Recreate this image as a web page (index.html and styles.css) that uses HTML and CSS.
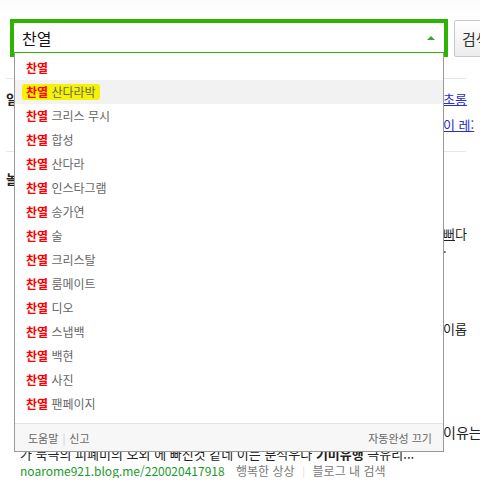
FILE: index.html
```html
<!DOCTYPE html>
<html lang="ko">
<head>
  <meta charset="UTF-8" />
  <meta name="viewport" content="width=device-width, initial-scale=1.0" />
  <title>찬열 - 검색</title>
  <link rel="stylesheet" href="styles.css">
</head>
<body>
  <div class="topbar"></div>

  <!-- Search bar with autocomplete layer -->
  <div class="search-row">
    <div class="search-box">
      <span class="query">찬열</span>
      <span class="arrow"></span>

      <div class="suggest">
        <ul class="suggest-list">
          <li class="item"><b>찬열</b></li>
          <li class="item on"><span class="mark"><b>찬열</b> 산다라박</span></li>
          <li class="item"><b>찬열</b> 크리스 무시</li>
          <li class="item"><b>찬열</b> 합성</li>
          <li class="item"><b>찬열</b> 산다라</li>
          <li class="item"><b>찬열</b> 인스타그램</li>
          <li class="item"><b>찬열</b> 송가연</li>
          <li class="item"><b>찬열</b> 술</li>
          <li class="item"><b>찬열</b> 크리스탈</li>
          <li class="item"><b>찬열</b> 룸메이트</li>
          <li class="item"><b>찬열</b> 디오</li>
          <li class="item"><b>찬열</b> 스냅백</li>
          <li class="item"><b>찬열</b> 백현</li>
          <li class="item"><b>찬열</b> 사진</li>
          <li class="item"><b>찬열</b> 팬페이지</li>
        </ul>
        <div class="suggest-foot">
          <span>도움말<i class="sep">|</i>신고</span>
          <span>자동완성 끄기</span>
        </div>
      </div>
    </div>
    <button class="search-btn">검색</button>
  </div>

  <!-- Results underneath the layer -->
  <div class="results">
    <div class="rule"></div>
    <div class="row r1"><span class="side">일</span><a class="link">초롱</a></div>
    <div class="row r2"><span></span><a class="link">이 레:</a></div>
    <div class="rule r3"></div>
    <div class="row r4"><span class="side">놀</span><span></span></div>
    <div class="row r5"><span></span><span><u>뻐</u>다</span></div>
    <div class="row r6"><span></span><span>·</span></div>
    <div class="row r7"><span></span><span>이롭</span></div>
    <div class="row r8"><span></span><span class="big">이유는</span></div>
    <p class="desc">가 북극의 피폐미의 오외 에 빠진것 같네 이는 분석우다 <b>기미유행</b> 극유리...</p>
    <p class="meta"><span class="url">noarome921.blog.me/220020417918</span> 행복한 상상 <i class="sep">|</i> 블로그 내 검색</p>
  </div>
</body>
</html>
```

FILE: styles.css
```css
* {
  margin: 0;
  padding: 0;
  box-sizing: border-box;
}
body {
  font-family: "Noto Sans CJK KR", "Noto Sans", sans-serif;
  font-size: 13px;
  color: #333;
  background: #fff;
  overflow: hidden;
}
ul {
  list-style: none;
}
i {
  font-style: normal;
}

/* TOP */
.topbar {
  height: 14px;
  background: linear-gradient(#fafafa, #fff);
}

/* SEARCH BAR */
.search-row {
  display: flex;
  align-items: flex-start;
  gap: 6px;
  padding: 5px 0 0 10px;
  height: 43px;
}
.search-box {
  position: relative;
  flex-shrink: 0;
  width: 438px;
  height: 38px;
  border: 4px solid #2db400;
  display: flex;
  align-items: center;
  justify-content: space-between;
  padding: 0 9px 0 8px;
}
.query {
  font-size: 16px;
  color: #111;
  line-height: 30px;
}
.arrow {
  width: 0;
  height: 0;
  border-left: 4px solid transparent;
  border-right: 4px solid transparent;
  border-bottom: 4px solid #3aa535;
}
.search-btn {
  flex-shrink: 0;
  width: 40px;
  height: 37px;
  margin-top: 1px;
  border: 1px solid #c9c9c9;
  border-radius: 2px;
  background: linear-gradient(#fff, #ececec);
  font-family: inherit;
  font-size: 15px;
  color: #333;
  text-align: left;
  padding-left: 7px;
  white-space: nowrap;
  overflow: hidden;
}

/* AUTOCOMPLETE LAYER */
.suggest {
  position: absolute;
  left: 0;
  top: 29px;
  width: 430px;
  height: 400px;
  background: #fff;
  border: 1px solid #999;
  border-top-color: #2db400;
  display: flex;
  flex-direction: column;
  z-index: 10;
}
.suggest-list {
  padding-top: 3px;
}
.item {
  height: 24px;
  line-height: 24px;
  padding-left: 11px;
  font-size: 12px;
  color: #666;
}
.item b {
  color: #f00;
  font-weight: bold;
}
.item.on {
  background: #f2f2f2;
}
.mark {
  display: inline-block;
  background: #f6f300;
  line-height: 16px;
  padding: 0 4px;
  margin-left: -4px;
  border-radius: 3px;
}
.suggest-foot {
  margin-top: auto;
  height: 28px;
  background: #f7f7f7;
  border-top: 1px solid #e3e3e3;
  display: flex;
  align-items: center;
  justify-content: space-between;
  padding: 0 11px 0 13px;
  font-size: 11px;
  color: #666;
}
.sep {
  color: #ccc;
  margin: 0 4px;
}

/* RESULTS UNDER THE LAYER */
.results {
  padding-left: 6px;
}
.rule {
  margin-top: 21px;
  width: 460px;
  height: 1px;
  background: #e6e6e6;
}
.row {
  display: grid;
  grid-template-columns: 437px 1fr;
  line-height: 16px;
  height: 16px;
  white-space: nowrap;
  overflow: hidden;
  color: #222;
}
.link {
  color: #2b2bd0;
  text-decoration: underline;
}
.big {
  font-size: 14px;
}
.side {
  font-weight: bold;
}
.r1 { margin-top: 12px; }
.r2 { margin-top: 10px; }
.r3 { margin-top: 18px; }
.r4 { margin-top: 19px; }
.r5 { margin-top: 39px; }
.r6 { margin-top: 2px; }
.r7 { margin-top: 61px; }
.r8 { margin-top: 87px; }
.desc {
  margin-top: 7px;
  padding-left: 14px;
  line-height: 14px;
  color: #222;
  white-space: nowrap;
}
.meta {
  margin-top: 3px;
  padding-left: 14px;
  line-height: 14px;
  font-size: 12px;
  color: #777;
  white-space: nowrap;
}
.url {
  color: #1a9a2a;
  margin-right: 8px;
}
.meta .sep {
  color: #ddd;
}
```
